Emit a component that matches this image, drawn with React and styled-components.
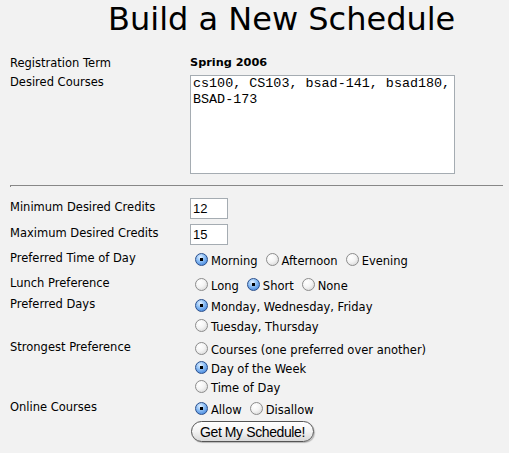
import React from 'react';
import styled, { createGlobalStyle } from 'styled-components';

const GlobalStyle = createGlobalStyle`
  html, body {
    margin: 0;
    background: #f2f2f2;
  }
  body {
    min-height: 100vh;
    font-family: "DejaVu Sans", Verdana, sans-serif;
    color: #000;
  }
`;

const Page = styled.div`
  padding: 0 6px 0 10px;
`;

const Title = styled.h1`
  margin: 0;
  padding: 1px 0 0 98px;
  font-family: "DejaVu Sans", Verdana, sans-serif;
  font-weight: normal;
  font-size: 32px;
  line-height: 36px;
  height: 56px;
  box-sizing: border-box;
`;

const Row = styled.div`
  display: grid;
  grid-template-columns: 180px 1fr;
  align-items: start;
  margin-top: ${(p) => p.$top || 0}px;
`;

const Label = styled.div`
  font-size: 11.5px;
  line-height: 14px;
  padding-top: ${(p) => p.$pad || 0}px;
`;

const Value = styled.div`
  font-size: 11.3px;
  line-height: 14px;
  font-weight: bold;
`;

const Courses = styled.textarea`
  width: 265px;
  height: 99px;
  box-sizing: border-box;
  margin: 0;
  padding: 0 2px;
  border: 1px solid #a5acb2;
  background: #fff;
  font-family: "Liberation Mono", "Courier New", monospace;
  font-size: 13.4px;
  line-height: 16px;
  resize: none;
  color: #000;
`;

const Rule = styled.hr`
  margin: 11px 0 11px 0;
  border: 0;
  border-top: 1px solid #888;
  border-left: 1px solid #888;
  height: 1px;
`;

const Credit = styled.input`
  width: 38px;
  height: 21px;
  box-sizing: border-box;
  margin: 0;
  padding: 0 2px;
  border: 1px solid #a5acb2;
  background: #fff;
  font-family: "Liberation Sans", Arial, sans-serif;
  font-size: 13px;
  color: #000;
`;

const Options = styled.div`
  display: flex;
  flex-direction: ${(p) => (p.$stack ? 'column' : 'row')};
  gap: ${(p) => (p.$stack ? 0 : 8)}px;
  padding-left: 5px;
`;

const Option = styled.label`
  display: flex;
  align-items: center;
  height: ${(p) => p.$h || 20}px;
  font-size: 11.5px;
  white-space: nowrap;
`;

const RadioBox = styled.input`
  appearance: none;
  width: 13px;
  height: 13px;
  margin: -3px 3px 0 0;
  border-radius: 50%;
  box-sizing: border-box;
  border: 1px solid #8c8c8c;
  background: radial-gradient(circle at 35% 30%, #ffffff 0%, #f4f4f4 45%, #cfcfcf 100%);
  flex: none;

  &:checked {
    border-color: #2a4f8c;
    background: radial-gradient(circle at 50% 50%, #000 0, #000 1.6px, transparent 2px),
      radial-gradient(circle at 40% 30%, #e6f2ff 0%, #8fc0f5 40%, #2f74d4 100%);
  }
`;

const Button = styled.button`
  margin: 1px 0 0 1px;
  height: 21px;
  padding: 0 8px;
  border: 1px solid #555;
  border-radius: 11px;
  background: linear-gradient(#ffffff 0%, #f3f3f3 50%, #d8d8d8 100%);
  box-shadow: 1px 1px 1px rgba(0, 0, 0, 0.25);
  font-family: "Liberation Sans", Arial, sans-serif;
  font-size: 14px;
  letter-spacing: -0.4px;
  color: #000;
`;

const Radio = ({ name, label, checked, h }) => (
  <Option $h={h}>
    <RadioBox type="radio" name={name} defaultChecked={checked} />
    {label}
  </Option>
);

export default function App() {
  return (
    <>
      <GlobalStyle />
      <Page>
        <Title>Build a New Schedule</Title>
        <Row>
          <Label>Registration Term</Label>
          <Value>Spring 2006</Value>
        </Row>
        <Row $top={5}>
          <Label>Desired Courses</Label>
          <Courses defaultValue="cs100, CS103, bsad-141, bsad180, BSAD-173" />
        </Row>
        <Rule />
        <Row>
          <Label $pad={2}>Minimum Desired Credits</Label>
          <Credit defaultValue="12" />
        </Row>
        <Row $top={5}>
          <Label $pad={2}>Maximum Desired Credits</Label>
          <Credit defaultValue="15" />
        </Row>
        <Row $top={6}>
          <Label>Preferred Time of Day</Label>
          <Options>
            <Radio name="time" label="Morning" checked />
            <Radio name="time" label="Afternoon" />
            <Radio name="time" label="Evening" />
          </Options>
        </Row>
        <Row $top={5}>
          <Label>Lunch Preference</Label>
          <Options>
            <Radio name="lunch" label="Long" />
            <Radio name="lunch" label="Short" checked />
            <Radio name="lunch" label="None" />
          </Options>
        </Row>
        <Row $top={1}>
          <Label>Preferred Days</Label>
          <Options $stack>
            <Radio name="days" label="Monday, Wednesday, Friday" checked />
            <Radio name="days" label="Tuesday, Thursday" />
          </Options>
        </Row>
        <Row $top={3}>
          <Label>Strongest Preference</Label>
          <Options $stack>
            <Radio name="strong" label="Courses (one preferred over another)" h={19} />
            <Radio name="strong" label="Day of the Week" checked h={19} />
            <Radio name="strong" label="Time of Day" h={19} />
          </Options>
        </Row>
        <Row $top={3}>
          <Label>Online Courses</Label>
          <div>
            <Options>
              <Radio name="online" label="Allow" checked />
              <Radio name="online" label="Disallow" />
            </Options>
            <Button type="button">Get My Schedule!</Button>
          </div>
        </Row>
      </Page>
    </>
  );
}
